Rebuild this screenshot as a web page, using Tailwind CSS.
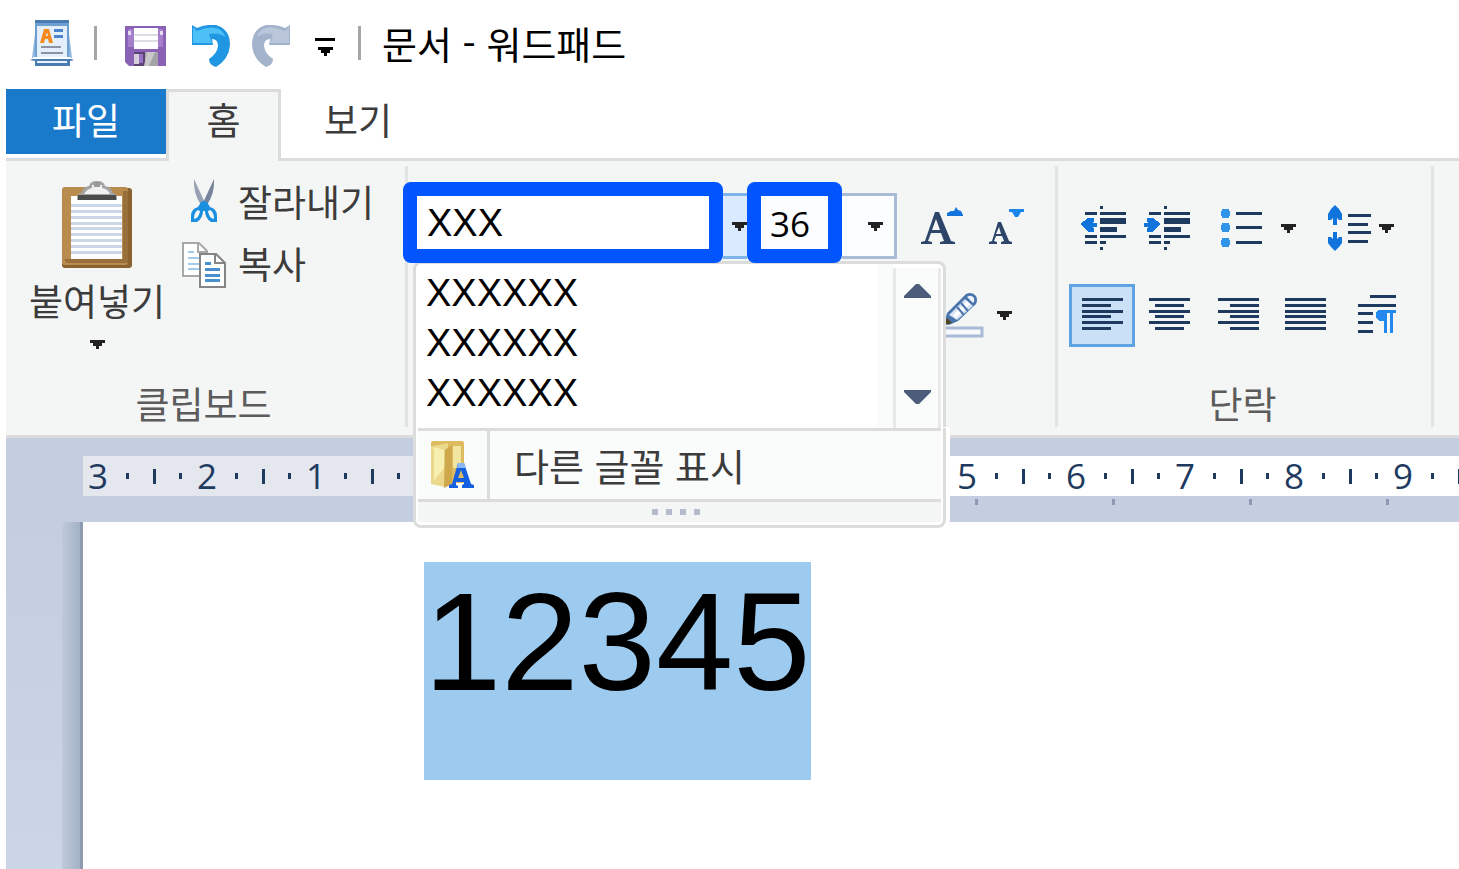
<!DOCTYPE html>
<html lang="ko">
  <head>
    <meta charset="UTF-8" />
    <meta name="viewport" content="width=device-width, initial-scale=1.0" />
    <title>문서 - 워드패드</title>
    <script src="https://cdn.jsdelivr.net/npm/@tailwindcss/browser@4"></script>
  </head>
  <body
    class="flex min-h-screen flex-col overflow-hidden bg-white pl-[6px] font-['Noto_Sans_CJK_KR',sans-serif] text-[37px] leading-[48px] font-normal text-[#3c3c3c]"
  >
    <!-- Title bar -->
    <header class="flex h-[89px] items-center pb-1 pl-6 text-black">
      <svg class="h-[46px] w-11 shrink-0" viewBox="0 0 44 46">
        <path d="M5 0h34v38l5 2-4 1v5H5v-5l-5-1 5-2z" fill="#4a7db4" />
        <path d="M2 38L6 5h32l4 33z" fill="#8fb7de" />
        <path d="M5 3h34v34H5z" fill="#6d9fd0" />
        <path d="M7 6h30v31H7z" fill="#e3f0fc" />
        <path d="M4 37h36l3 2H1z" fill="#fff" />
        <path d="M7 41h30v2H7z" fill="#e8f1fa" />
        <path d="M10 23l4-14h5l4 14h-4l-1-4h-3l-1 4zm6-7h2l-1-4z" fill="#f58a1f" fill-rule="evenodd" />
        <path d="M24 9h9v3h-9zM24 15h9v3h-9z" fill="#4c83cf" />
        <path d="M11 26h20v2H11zM11 32h22v2H11z" fill="#8b93a5" />
      </svg>
      <span class="ml-5 h-[34px] w-[3px] bg-[#a6a6a6]"></span>
      <button class="ml-7 pt-[6px]" aria-label="저장">
        <svg class="h-[40px] w-[41px]" viewBox="0 0 41 40">
          <path d="M0 0h41v40H4l-4-4z" fill="#8a62b5" />
          <path d="M3 3h35v18H3z" fill="#a57fcb" />
          <path d="M9 2h24v21H9z" fill="#fff" />
          <path d="M9 8h24v2H9zM9 14h24v2H9z" fill="#dadde2" />
          <path d="M3 5h3v4H3zM35 5h3v4h-3z" fill="#e6dcef" />
          <path d="M9 26h24v14H9z" fill="#a3a3a8" />
          <path d="M9 26h11v14H9z" fill="#5c4474" />
          <path d="M9 28h5v10H9z" fill="#d5d0dc" />
          <path d="M14 28h4v9h-4z" fill="#9a73c4" />
          <path d="M22 26h8l-6 14h-5z" fill="#c9c9cc" />
        </svg>
      </button>
      <button class="ml-[26px] pt-[6px]" aria-label="실행 취소">
        <svg class="h-[42px] w-[38px]" viewBox="0 0 38 42">
          <path d="M0 0l5 3Q14-1 24 0 38 4 38 20 37 34 24 42q-7-2-7-8 8-5 9-13 0-7-6-7l1 6H0z" fill="#2196e3" />
          <path d="M1 2l4 4q14-6 22-2 5 3 6 8-6-5-16-3l3 9H1z" fill="#4cc0f7" />
        </svg>
      </button>
      <button class="ml-[22px] pt-[6px]" aria-label="다시 실행">
        <svg class="h-[42px] w-[38px]" viewBox="0 0 38 42">
          <path d="M38 0l-5 3Q24-1 14 0 0 4 0 20 1 34 14 42q7-2 7-8-8-5-9-13 0-7 6-7l-1 6h21z" fill="#a3b3cc" />
          <path d="M37 2l-4 4q-14-6-22-2-5 3-6 8 6-5 16-3l-3 9h19z" fill="#bac7db" />
        </svg>
      </button>
      <button class="ml-[25px] pt-2" aria-label="빠른 실행 도구 모음 사용자 지정">
        <svg class="h-[18px] w-5" viewBox="0 0 20 18" shape-rendering="crispEdges">
          <path d="M0 0h20v3H0zM3 9h15v3h-3v3h-3v3H9v-3H6v-3H3z" />
        </svg>
      </button>
      <span class="ml-[23px] h-[34px] w-[3px] bg-[#a6a6a6]"></span>
      <h1 class="ml-[21px] text-[38px] whitespace-pre">문서 - 워드패드</h1>
    </header>

    <!-- Ribbon tabs -->
    <nav class="flex h-[69px] items-start">
      <button class="h-[65px] w-40 bg-[#1979ca] pb-[6px] text-white">파일</button>
      <button class="relative z-10 h-[72px] w-[115px] border-3 border-b-0 border-[#dcdcdc] bg-[#f4f6f5] pb-4">홈</button>
      <button class="h-[65px] w-[154px] pb-[6px]">보기</button>
    </nav>

    <!-- Ribbon -->
    <section class="flex h-[280px] border-y-3 border-[#dcdcdc] bg-[#f4f6f5]">
      <div class="flex w-[399px] flex-col">
        <div class="flex h-[218px] pl-6 pt-5">
          <button class="flex w-[134px] flex-col items-center whitespace-nowrap">
            <svg class="h-[88px] w-[72px]" viewBox="0 0 72 88">
              <rect x="1" y="7" width="70" height="80" rx="3" fill="#8a6230" />
              <rect x="1" y="6" width="66" height="78" rx="3" fill="#b98b4f" />
              <path d="M62 10h5v72H6l-3-4h59z" fill="#99703a" />
              <path d="M10 15h51v63H10z" fill="#fff" />
              <path d="M10 23h51v3H10zM10 29h51v3H10zM10 35h51v3H10zM10 41h51v3H10zM10 46h51v3H10zM10 52h51v3H10zM10 58h51v3H10zM10 64h51v3H10zM10 70h51v3H10z" fill="#cbd6e6" />
              <path d="M16 19v-5l4-2q2-6 8-7 1-5 8-5t8 5q6 1 8 7l4 2v5z" fill="#a4a4a4" />
              <path d="M23 13q3-5 8-6v-3h10v3q6 1 8 6z" fill="#f1f1f1" />
              <path d="M33 1h6v5h-6z" fill="#999" />
              <path d="M17 14h38v5H17z" fill="#4c4c4c" />
            </svg>
            <span class="mt-[7px]">붙여넣기</span>
            <svg class="mt-4 h-[9px] w-[15px] shrink-0" viewBox="0 0 15 9" shape-rendering="crispEdges">
              <path d="M0 0h15v3h-3v3H9v3H6V6H3V3H0z" fill="#222" />
            </svg>
          </button>
          <div class="-mt-1 flex flex-col gap-[14px] pl-[18px]">
            <button class="flex h-12 items-center">
              <svg class="mx-2 h-11 w-[28px]" viewBox="0 0 28 44">
                <path d="M4 0l12 26h-5Q3 14 4 0z" fill="#98a2b3" />
                <path d="M24 0L12 26h5Q25 14 24 0z" fill="#77839a" />
                <path d="M11 23q3-2 6 0l3 5q7 2 7 9v6h-6q-6-4-6-11h-2q0 7-6 11H1v-6q0-7 7-9zM8 31q-4 2-4 9 5-1 6-8zm12 0q4 2 4 9-5-1-6-8z" fill="#1a8fe0" fill-rule="evenodd" />
              </svg>
              <span class="ml-3">잘라내기</span>
            </button>
            <button class="flex h-12 items-center">
              <svg class="mt-1 h-[46px] w-[44px]" viewBox="0 0 44 46">
                <path d="M1 1h16l8 8v25H1z" fill="#fff" stroke="#a8a8a8" stroke-width="2" />
                <path d="M16 1v9h9" fill="none" stroke="#a8a8a8" stroke-width="2" />
                <path d="M6 9h6v2H6zM6 15h14v2H6zM6 21h14v2H6zM6 26h14v2H6z" fill="#a5cbea" />
                <path d="M18 12h16l9 9v24H18z" fill="#fff" stroke="#858585" stroke-width="2" />
                <path d="M33 12v9h9" fill="none" stroke="#858585" stroke-width="2" />
                <path d="M23 20h6v3h-6zM23 26h15v3H23zM23 32h15v3H23zM23 37h15v3H23z" fill="#4a90cd" />
              </svg>
              <span class="ml-3">복사</span>
            </button>
          </div>
        </div>
        <span class="pr-1 text-center text-[#5c5c5c]">클립보드</span>
      </div>
      <span class="mt-[5px] mb-2 w-[3px] bg-[#e2e4e4]"></span>

      <!-- Font group -->
      <div class="relative w-[647px]">
        <div class="-ml-[5px] flex items-center pt-[21px] font-['Open_Sans',sans-serif] text-black">
          <input
            type="text"
            aria-label="글꼴 패밀리"
            value="XXX"
            class="relative z-20 h-[81px] w-80 rounded-lg border-14 border-[#0055ff] bg-white pt-[2px] pl-[10px] font-['Liberation_Sans',sans-serif] text-[38px] outline-none"
          />
          <button class="mt-[7px] flex h-[66px] w-6 items-center justify-end border-y-3 border-[#7eb4ea] bg-[#daebff]" aria-label="글꼴 목록">
            <svg class="h-[9px] w-[15px]" viewBox="0 0 15 9" shape-rendering="crispEdges">
              <path d="M0 0h15v3h-3v3H9v3H6V6H3V3H0z" fill="#222" />
            </svg>
          </button>
          <input
            type="text"
            aria-label="글꼴 크기"
            value="36"
            class="relative z-20 h-[81px] w-[95px] rounded-lg border-14 border-[#0055ff] bg-[#fbfdfe] pt-[2px] pl-[9px] text-[35px] outline-none"
          />
          <button class="mt-[7px] flex h-[66px] w-[55px] items-center border-3 border-l-0 border-[#a9bcd6] bg-[#fbfdfe] pl-[26px]" aria-label="크기 목록">
            <svg class="h-[9px] w-[15px]" viewBox="0 0 15 9" shape-rendering="crispEdges">
              <path d="M0 0h15v3h-3v3H9v3H6V6H3V3H0z" fill="#222" />
            </svg>
          </button>
          <button class="mt-[7px] ml-6 shrink-0" aria-label="글꼴 크게">
            <svg class="h-[38px] w-[42px]" viewBox="0 0 42 38">
              <path d="M14 5h4l12 29 4 1v2H19v-2l4-1-3-8H10l-3 8 4 1v2H0v-2l4-1zM11 23h8l-4-11z" fill="#2c4569" fill-rule="evenodd" />
              <path d="M26 6l4-2h3l2-4 2 3 3 1 2 4v1H26z" fill="#1174dd" />
            </svg>
          </button>
          <button class="mt-[7px] ml-[26px] shrink-0" aria-label="글꼴 작게">
            <svg class="h-[38px] w-[35px]" viewBox="0 0 35 38">
              <path d="M9 15h3l8 19 3 1v2H12v-2l3-1-2-5H7l-2 5 3 1v2H0v-2l3-1zM7 27h5l-2-7z" fill="#2c4569" fill-rule="evenodd" />
              <path d="M20 2h15v3h-3l-3 5h-3l-3-5h-3z" fill="#1b86ec" />
            </svg>
          </button>
        </div>
        <div class="mt-[28px] flex items-center pl-[532px]">
          <button class="shrink-0" aria-label="텍스트 강조 색">
            <svg class="h-[48px] w-[44px]" viewBox="0 0 44 48">
              <path d="M2 37h40v8H2z" fill="#f7f9fc" stroke="#a9bad6" stroke-width="3" />
              <path d="M4 33L7 22 26 3q6-3 10 2 2 4 0 8L18 30 9 34z" fill="#4a74ac" />
              <path d="M9 24L25 8l8 7-16 14z" fill="#d8e3f5" />
              <path d="M13 24L27 10l3 3-14 14z" fill="#fff" />
              <path d="M27 6q4-3 7 1 1 3-1 5z" fill="#eef3fa" />
              <path d="M21 12l7 8M17 16l7 8" stroke="#4a74ac" stroke-width="2" />
              <path d="M4 34l3-7 5 5z" fill="#54471f" />
            </svg>
          </button>
          <button class="ml-[13px]" aria-label="강조 색 목록">
            <svg class="h-[9px] w-[15px]" viewBox="0 0 15 9" shape-rendering="crispEdges">
              <path d="M0 0h15v3h-3v3H9v3H6V6H3V3H0z" fill="#222" />
            </svg>
          </button>
        </div>

        <!-- Font list -->
        <div class="absolute top-[100px] left-[5px] z-10 w-[533px]">
          <div class="flex h-[167px] rounded-t-lg border-3 border-b-0 border-[#dcdcdc] bg-white">
            <ul
              class="flex-1 border-r-16 border-[#fafcfb] pt-1 pl-[10px] font-['Liberation_Sans',sans-serif] text-[38px] leading-[50px] text-black"
              role="listbox"
            >
              <li role="option">XXXXXX</li>
              <li role="option">XXXXXX</li>
              <li role="option">XXXXXX</li>
            </ul>
            <div class="mt-1 mr-[2px] flex w-12 flex-col items-center justify-between border-x-3 border-[#e8eaea] bg-[#fafcfb] pt-4 pb-6">
              <button class="flex" aria-label="위로">
                <svg class="h-[14px] w-[27px]" viewBox="0 0 27 14">
                  <path d="M0 14v-2L12 0h3l12 12v2z" fill="#4d5c7a" />
                </svg>
              </button>
              <button class="flex" aria-label="아래로">
                <svg class="h-[14px] w-[27px]" viewBox="0 0 27 14">
                  <path d="M0 0v2l12 12h3L27 2V0z" fill="#4d5c7a" />
                </svg>
              </button>
            </div>
          </div>
          <div class="rounded-b-lg border-3 border-t-0 border-[#dcdcdc] bg-white px-[2px] pb-[3px] shadow-[4px_-1px_0_#fff]">
            <button class="flex h-[74px] w-full items-center border-y-3 border-[#dcdcdc] bg-[#fafcfb] text-left">
              <span class="flex h-full w-[72px] items-center border-r-3 border-[#dcdcdc] pl-3">
                <svg class="h-12 w-11" viewBox="0 0 44 48">
                  <path d="M1 2q0-2 2-2h29q2 0 2 2v40H1z" fill="#ddbb5e" />
                  <path d="M3 5l15-3v40l-3 4L1 43V5z" fill="#ecd88b" />
                  <path d="M4 6l10 3v18L4 40z" fill="#f7efb0" />
                  <path d="M15 9l7-5v39l-8 4z" fill="#cda94c" />
                  <path d="M23 5h8v22h-8z" fill="#f1e5a0" />
                  <path d="M28 22h6l7 21 3 1v3H32v-3l2-1v-2h-8v3l2 1v2h-9v-3l3-1zm3 7l-3 8h6z" fill="#1560e0" fill-rule="evenodd" />
                  <path d="M28 22h6l2 5h-9z" fill="#8bb7f3" />
                </svg>
              </span>
              <span class="pl-6 text-[38px]">다른 글꼴 표시</span>
            </button>
            <div class="flex h-5 items-center justify-center gap-2 bg-[#f4f6f5] pr-2">
              <i class="size-[6px] bg-[#b5bdcb]"></i>
              <i class="size-[6px] bg-[#b5bdcb]"></i>
              <i class="size-[6px] bg-[#b5bdcb]"></i>
              <i class="size-[6px] bg-[#b5bdcb]"></i>
            </div>
          </div>
        </div>
      </div>
      <span class="mt-[5px] mb-2 w-[3px] bg-[#e2e4e4]"></span>

      <!-- Paragraph group -->
      <div class="flex w-[373px] flex-col">
        <div class="flex h-[218px] flex-col pt-[35px] pl-[11px]">
          <div class="flex h-16 items-center">
            <button class="flex w-[68px] justify-center" aria-label="내어쓰기">
              <svg class="h-11 w-[46px]" viewBox="0 0 46 44" shape-rendering="crispEdges">
                <path d="M20 0h3v3h-3zM5 6h12v3H5zM20 6h26v3H20zM20 12h26v6H20zM20 21h17v5H20zM5 29h12v3H5zM20 29h26v3H20zM5 35h12v3H5zM20 35h6v3h-6zM20 41h3v3h-3z" fill="#1f3a5f" />
                <path d="M0 18l8-6h6v4l-2 1h5v4h-5l2 1v4H9z" fill="#1174dd" />
              </svg>
            </button>
            <button class="flex w-[60px] justify-center" aria-label="들여쓰기">
              <svg class="h-11 w-[46px]" viewBox="0 0 46 44" shape-rendering="crispEdges">
                <path d="M20 0h3v3h-3zM5 6h12v3H5zM20 6h26v3H20zM20 12h26v6H20zM20 21h17v5H20zM5 29h12v3H5zM20 29h26v3H20zM5 35h12v3H5zM20 35h6v3h-6zM20 41h3v3h-3z" fill="#1f3a5f" />
                <path d="M17 18l-8-6H3v4l2 1H0v4h5l-2 1v4h5z" fill="#1174dd" />
              </svg>
            </button>
            <button class="ml-6 flex items-center gap-[19px]" aria-label="목록 시작">
              <svg class="h-[38px] w-[41px]" viewBox="0 0 41 38">
                <path d="M15 3h26v3H15zM15 17h26v3H15zM15 32h26v3H15z" fill="#1f3a5f" />
                <path d="M1 0h7v9H1zM1 14h7v9H1zM1 29h7v9H1zM0 2h9v5H0zM0 16h9v5H0zM0 31h9v5H0z" fill="#2f93ea" />
              </svg>
              <svg class="h-[9px] w-[15px]" viewBox="0 0 15 9" shape-rendering="crispEdges">
                <path d="M0 0h15v3h-3v3H9v3H6V6H3V3H0z" fill="#222" />
              </svg>
            </button>
            <button class="ml-8 flex items-center gap-2" aria-label="줄 간격">
              <svg class="h-[46px] w-[43px]" viewBox="0 0 43 46">
                <path d="M20 9h23v3H20zM20 18h20v3H20zM20 26h23v3H20zM20 35h20v3H20z" fill="#1f3a5f" />
                <path d="M7 0l4 4 3 5v6h-3l-2-2v7H5v-7l-2 2H0V9l3-5zM7 46l4-4 3-4v-6h-3l-2 2v-7H5v7l-2-2H0v6l3 4z" fill="#1174dd" />
              </svg>
              <svg class="h-[9px] w-[15px]" viewBox="0 0 15 9" shape-rendering="crispEdges">
                <path d="M0 0h15v3h-3v3H9v3H6V6H3V3H0z" fill="#222" />
              </svg>
            </button>
          </div>
          <div class="mt-6 flex h-[63px] items-stretch">
            <button class="flex w-[66px] items-center justify-center border-3 border-[#5fa3e3] bg-[#c9e0f7] pb-[3px]" aria-label="왼쪽 맞춤">
              <svg class="h-8 w-[41px]" viewBox="0 0 41 32" shape-rendering="crispEdges">
                <path d="M0 0h41v3H0zM0 6h29v3H0zM0 12h41v3H0zM0 17h29v3H0zM0 23h41v3H0zM0 29h29v3H0z" fill="#1f3a5f" />
              </svg>
            </button>
            <button class="flex w-[69px] items-center justify-center pb-[3px]" aria-label="가운데 맞춤">
              <svg class="h-8 w-[41px]" viewBox="0 0 41 32" shape-rendering="crispEdges">
                <path d="M0 0h41v3H0zM6 6h29v3H6zM0 12h41v3H0zM6 17h29v3H6zM0 23h41v3H0zM6 29h29v3H6z" fill="#1f3a5f" />
              </svg>
            </button>
            <button class="flex w-[69px] items-center justify-center pb-[3px]" aria-label="오른쪽 맞춤">
              <svg class="h-8 w-[41px]" viewBox="0 0 41 32" shape-rendering="crispEdges">
                <path d="M0 0h41v3H0zM12 6h29v3H12zM0 12h41v3H0zM12 17h29v3H12zM0 23h41v3H0zM12 29h29v3H12z" fill="#1f3a5f" />
              </svg>
            </button>
            <button class="flex w-16 items-center justify-center pb-[3px]" aria-label="양쪽 맞춤">
              <svg class="h-8 w-[41px]" viewBox="0 0 41 32" shape-rendering="crispEdges">
                <path d="M0 0h41v3H0zM0 6h41v3H0zM0 12h41v3H0zM0 17h41v3H0zM0 23h41v3H0zM0 29h41v3H0z" fill="#1f3a5f" />
              </svg>
            </button>
            <button class="flex w-20 items-center justify-center pb-[3px]" aria-label="단락">
              <svg class="h-[38px] w-[38px]" viewBox="0 0 38 38" shape-rendering="crispEdges">
                <path d="M12 0h26v3H12zM0 9h38v3H0zM0 17h15v3H0zM0 26h15v3H0zM0 35h15v3H0z" fill="#1f3a5f" />
                <path d="M20 15h18v3h-3v20h-3V18h-3v20h-3V26h-4l-4-3v-5z" fill="#2288ee" />
              </svg>
            </button>
          </div>
        </div>
        <span class="pr-1 text-center text-[#5c5c5c]">단락</span>
      </div>
      <span class="mt-[5px] mb-2 w-[3px] bg-[#e2e4e4]"></span>
    </section>

    <!-- Ruler -->
    <div class="h-[84px] bg-[#c5cde0] pt-[18px] pl-[77px] font-['Open_Sans',sans-serif] text-[35px] leading-10 text-[#1f3a5f]">
      <div class="flex h-10">
        <div class="flex w-[330px] shrink-0 bg-[#e4e7ee]" data-marks="3,2,1"></div>
        <div class="w-[539px] shrink-0 bg-white"></div>
        <div class="flex min-w-0 flex-1 bg-white" data-marks="5,6,7,8,9"></div>
      </div>
      <!-- Tab stops -->
      <div class="flex gap-[134px] pt-[3px] pl-[344px]">
        <i class="h-[6px] w-[3px] shrink-0 bg-[#8c99b5]"></i>
        <i class="h-[6px] w-[3px] shrink-0 bg-[#8c99b5]"></i>
        <i class="h-[6px] w-[3px] shrink-0 bg-[#8c99b5]"></i>
        <i class="h-[6px] w-[3px] shrink-0 bg-[#8c99b5]"></i>
        <i class="h-[6px] w-[3px] shrink-0 bg-[#8c99b5]"></i>
        <i class="h-[6px] w-[3px] shrink-0 bg-[#8c99b5]"></i>
        <i class="h-[6px] w-[3px] shrink-0 bg-[#8c99b5]"></i>
        <i class="h-[6px] w-[3px] shrink-0 bg-[#8c99b5]"></i>
      </div>
    </div>

    <!-- Document -->
    <main class="flex flex-1">
      <div class="flex w-[77px] justify-end bg-linear-to-b from-[#c5cde0] to-[#ccd5e5]">
        <span class="w-[18px] bg-linear-to-r from-[#bfcad9] to-[#a3b2c6]"></span>
        <span class="w-[3px] bg-[#8e9bb0]"></span>
      </div>
      <div class="flex-1 pt-10 pl-[341px]">
        <p class="w-fit bg-[#9ccbef] pb-[58px] font-['Liberation_Sans',sans-serif] text-[139px] leading-[160px] text-black">12345</p>
      </div>
    </main>

    <script>
      // one centimetre per cell: number, quarter dot, half bar, quarter dot
      document.querySelectorAll("[data-marks]").forEach((strip) => {
        strip.innerHTML = strip.dataset.marks
          .split(",")
          .map(
            (n) => `
            <div class="grid w-[109px] shrink-0 grid-cols-[30px_28px_27px_24px] items-center justify-items-center">
              <span>${n}</span>
              <i class="h-[6px] w-[3px] bg-[#1f3a5f]"></i>
              <i class="h-[15px] w-[3px] bg-[#1f3a5f]"></i>
              <i class="h-[6px] w-[3px] bg-[#1f3a5f]"></i>
            </div>`
          )
          .join("");
      });
    </script>
  </body>
</html>
